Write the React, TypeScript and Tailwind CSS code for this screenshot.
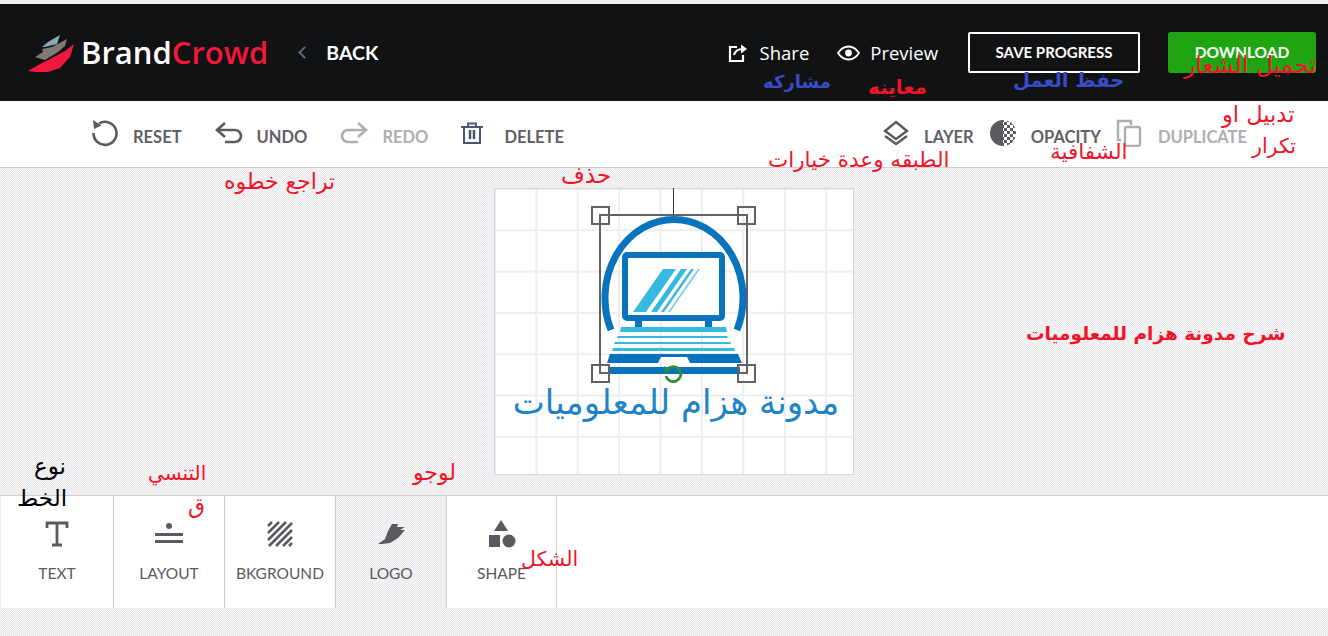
import React from "react";

function Note({ className, blue, children }: { className: string; blue?: boolean; children: React.ReactNode }) {
  const colour = blue ? "font-bold text-[#3a4bc8]" : "text-[#f01428]";
  return (
    <span dir="rtl" className={`absolute font-['DejaVu_Sans',sans-serif] leading-[24px] whitespace-nowrap ${colour} ${className}`}>
      {children}
    </span>
  );
}

function ResetIcon() {
  return (
    <svg width="28" height="28" viewBox="0 0 28 28" fill="none" stroke="#5c5a60" strokeWidth="2.600">
      <path d="M8 4.500A11.500 11.500 0 1 1 2.500 14" />
      <path d="M2 1l1 9 7.500-3.500Z" fill="#5c5a60" stroke="none" />
    </svg>
  );
}

function UndoIcon({ color = "#5c5a60", flip = false }: { color?: string; flip?: boolean }) {
  return (
    <svg width="28" height="24" viewBox="0 0 28 24" fill="none" stroke={color} strokeWidth="2.600" className={flip ? "-scale-x-100" : ""}>
      <path d="M10 2 2 9l8 7" />
      <path d="M2 9h18a6 6 0 0 1 6 6v0a6 6 0 0 1-6 6h-10" />
    </svg>
  );
}

function TrashIcon() {
  return (
    <svg width="22" height="22" viewBox="0 0 22 22" fill="none" stroke="#4a5875" strokeWidth="2">
      <path d="M0 5h22M7 5V1.500h8V5M3 5v16h16V5" />
      <path d="M9 8v9M13 8v9" strokeWidth="2.500" />
    </svg>
  );
}

function LayerIcon() {
  return (
    <svg width="28" height="26" viewBox="0 0 28 26" fill="none" stroke="#5c5a60" strokeWidth="2.400">
      <path d="M14 2 25 11 14 19 3 11Z" />
      <path d="M3 16l11 8 11-8" />
    </svg>
  );
}

function OpacityIcon() {
  return (
    <svg width="28" height="28" viewBox="0 0 28 28">
      <defs>
        <pattern id="checks" width="6" height="6" patternUnits="userSpaceOnUse">
          <rect width="3" height="3" fill="#5c5a60" />
          <rect x="3" y="3" width="3" height="3" fill="#5c5a60" />
        </pattern>
      </defs>
      <path d="M14 1a13 13 0 0 0 0 26Z" fill="#5c5a60" />
      <path d="M14 1a13 13 0 0 1 0 26Z" fill="url(#checks)" />
    </svg>
  );
}

function DuplicateIcon() {
  return (
    <svg width="26" height="28" viewBox="0 0 26 28" fill="none" stroke="#aeaeb0" strokeWidth="2.400">
      <path d="M5 21H2V2h13v4" />
      <rect x="9" y="8" width="15" height="19" rx="2" />
    </svg>
  );
}

function ShareIcon() {
  return (
    <svg width="21" height="20" viewBox="0 0 21 20" fill="none" stroke="#fff" strokeWidth="2.200">
      <path d="M9 4H2v14h13v-6" />
      <path d="M6 12c1-4 4-6 9-6" />
      <path d="M13 1.500 19 6l-6 4.500Z" fill="#fff" stroke="none" />
    </svg>
  );
}

function EyeIcon() {
  return (
    <svg width="23" height="16" viewBox="0 0 23 16" fill="none" stroke="#fff" strokeWidth="1.800">
      <path d="M1 8c3-4.500 6.500-6.500 10.500-6.500S19 3.500 22 8c-3 4.500-6.500 6.500-10.500 6.500S4 12.500 1 8Z" />
      <circle cx="11.500" cy="8" r="2.500" fill="#fff" />
    </svg>
  );
}

function BrandLogo() {
  return (
    <svg width="46" height="38" viewBox="0 0 46 38" className="overflow-visible">
      <path d="M13 13 19 8 31 1 29 7 28 10 16 13Z" fill="#8fa8b8" />
      <path d="M6 23 14 18 13 15 23 13 38 5 36 12 29 18 16 26Z" fill="#7f7a76" />
      <path d="M-1 37 11 30 21 25 36 17 45 10 41 23 31 34 19 38 6 38Z" fill="#f0183c" />
    </svg>
  );
}

function TextIcon() {
  return (
    <svg width="24" height="26" viewBox="0 0 24 26" fill="none" stroke="#5c5a60" strokeWidth="2.800">
      <path d="M2 7V2h20v5M12 2v22M7 24h10" />
    </svg>
  );
}

function LayoutIcon() {
  return (
    <svg width="30" height="24" viewBox="0 0 30 24" fill="#5c5a60">
      <circle cx="15" cy="4" r="3" />
      <rect x="1" y="11" width="28" height="3" />
      <rect x="1" y="18" width="28" height="3" />
    </svg>
  );
}

function BackgroundIcon() {
  return (
    <svg width="26" height="26" viewBox="0 0 26 26" fill="none" stroke="#5c5a60" strokeWidth="2.600">
      <path d="M1 5 5 1M1 12 12 1M1 19 19 1M2 25 25 2M9 25 25 9M16 25l9-9M22 25l3-3" />
    </svg>
  );
}

function LogoIcon() {
  return (
    <svg width="30" height="26" viewBox="0 0 30 26" fill="#5c5a60">
      <path d="M2 23 9 18 12 10 16 3 22 3 21 6 29 6 24 9 29 9 22 17 14 22 6 23Z" />
    </svg>
  );
}

function ShapeIcon() {
  return (
    <svg width="28" height="28" viewBox="0 0 28 28" fill="#5c5a60">
      <path d="M13 0l7 11H6Z" />
      <rect x="1" y="15" width="11" height="12" />
      <circle cx="21" cy="21" r="6.500" />
    </svg>
  );
}

function LaptopArt() {
  return (
    <svg width="148" height="162" viewBox="0 0 148 162" className="block">
      <path d="M11 115A69 78.500 0 1 1 137 115" fill="none" stroke="#0a73bd" strokeWidth="7" />
      <rect x="25" y="40" width="97" height="63" rx="2" fill="#fff" stroke="#0a73bd" strokeWidth="6" />
      <path d="M33 97 63 54h13L46 97Z" fill="#36b8e0" />
      <path d="M51 97 81 54h6L57 97Z" fill="#36b8e0" />
      <path d="M61 97 91 54h3L64 97Z" fill="#36b8e0" />
      <path d="M68 97l30-43h2L70 97Z" fill="#70cdea" />
      <rect x="35" y="106" width="7" height="7" fill="#0a73bd" />
      <rect x="105" y="106" width="7" height="7" fill="#0a73bd" />
      <path d="M21 112h105l1 5H20Z" fill="#36b8e0" />
      <path d="M18 121h109l1 2H17Z" fill="#36b8e0" />
      <path d="M15 127h115l1 2H14Z" fill="#36b8e0" />
      <path d="M13 133h121l1 3H12Z" fill="#36b8e0" />
      <path d="M10 139h128l4 9H90l-3-6H61l-3 6H7Z" fill="#0a73bd" />
      <rect x="8" y="152" width="132" height="7" fill="#0a73bd" />
    </svg>
  );
}

function Handle({ className }: { className: string }) {
  return <div className={`absolute h-[19px] w-[19px] border-2 border-[#626262] ${className}`} />;
}

function ToolItem({ icon, label, muted, gap }: { icon: React.ReactNode; label: string; muted?: boolean; gap: string }) {
  return (
    <div className={`flex items-center ${gap} ${muted ? "text-[#aeaeb0]" : "text-[#625f66]"}`}>
      <span className="mb-[3px] flex">{icon}</span>
      <span className="pt-[6px] text-[16.500px] font-bold leading-none">{label}</span>
    </div>
  );
}

function Tab({ icon, label, active, width }: { icon: React.ReactNode; label: string; active?: boolean; width: string }) {
  return (
    <div className={`flex h-full ${width} flex-col items-center border-r border-[#cfcfcf] pt-[23px] ${active ? "" : "bg-white"}`}>
      <div className="flex h-[30px] items-center">{icon}</div>
      <span className="mt-[14px] text-[15.500px] leading-[20px] text-[#5c5a60]">{label}</span>
    </div>
  );
}

export default function App() {
  return (
    <div className="relative h-[636px] w-[1328px] overflow-hidden bg-[repeating-conic-gradient(#e6e6ec_0_25%,#f7f7f5_0_50%)] bg-[size:2px_2px] font-['Lato',sans-serif]">
      <div className="h-[4px]" />
      <header className="flex h-[97px] items-center bg-[#111213] pr-[12px] pl-[29px]">
        <BrandLogo />
        <div className="ml-[6px] font-['Open_Sans',sans-serif] text-[31px] leading-none font-semibold text-white">
          Brand<span className="text-[#f0183c]">Crowd</span>
        </div>
        <span className="ml-[32px] h-[9px] w-[9px] -rotate-45 border-t-2 border-l-2 border-[#616a80]" />
        <span className="ml-[17px] text-[19.500px] font-bold text-white">BACK</span>
        <div className="ml-auto flex items-center text-white">
          <ShareIcon />
          <span className="ml-[11px] font-['Open_Sans',sans-serif] text-[18.500px]">Share</span>
          <span className="ml-[28px] flex"><EyeIcon /></span>
          <span className="ml-[10px] font-['Open_Sans',sans-serif] text-[18.500px]">Preview</span>
          <button className="ml-[30px] h-[41px] w-[172px] rounded-[2px] border-2 border-white text-[15px] font-bold">SAVE PROGRESS</button>
          <button className="ml-[28px] h-[41px] w-[148px] rounded-[3px] bg-[#20a512] text-[15.500px] font-bold">DOWNLOAD</button>
        </div>
      </header>

      <div className="flex h-[67px] items-center justify-between border-b border-[#cfcfcf] bg-white pr-[81px] pl-[91px]">
        <div className="flex items-center gap-[33px]">
          <ToolItem icon={<ResetIcon />} label="RESET" gap="gap-[14px]" />
          <ToolItem icon={<UndoIcon />} label="UNDO" gap="gap-[14px]" />
          <ToolItem icon={<UndoIcon color="#aeaeb0" flip />} label="REDO" muted gap="gap-[14px]" />
          <ToolItem icon={<TrashIcon />} label="DELETE" gap="gap-[21px]" />
        </div>
        <div className="flex items-center gap-[15px]">
          <ToolItem icon={<LayerIcon />} label="LAYER" gap="gap-[14px]" />
          <ToolItem icon={<OpacityIcon />} label="OPACITY" gap="gap-[14px]" />
          <ToolItem icon={<DuplicateIcon />} label="DUPLICATE" muted gap="gap-[16px]" />
        </div>
      </div>

      <main className="h-[327px] pt-[20px] pl-[494px]">
        <div className="relative h-[287px] w-[360px] border border-[#d6d6d6] bg-white bg-[linear-gradient(to_right,#eeebf2_2px,transparent_2px),linear-gradient(to_bottom,#eeeeee_2px,transparent_2px)] bg-[size:41.400px_41.300px] bg-[position:-1px_-1px]">
          <div className="absolute top-[-1px] left-[178px] h-[26px] w-[1px] bg-[#333]" />
          <div className="absolute top-[25px] left-[104px] h-[160px] w-[149px] border-2 border-[#626262]" />
          <div className="absolute top-[26px] left-[105px]"><LaptopArt /></div>
          <Handle className="top-[17px] left-[96px]" />
          <Handle className="top-[17px] left-[242px]" />
          <Handle className="top-[175px] left-[96px]" />
          <Handle className="top-[175px] left-[242px]" />
          <svg width="20" height="20" viewBox="0 0 20 20" fill="none" stroke="#2f8f3c" strokeWidth="2.800" className="absolute top-[175px] left-[168px]">
            <path d="M6 4a7.500 7.500 0 1 1-3 8" />
            <path d="M1 2l1 7 6-3Z" fill="#2f8f3c" stroke="none" />
          </svg>
          <div dir="rtl" className="absolute top-[191px] left-[2px] w-full text-center font-['DejaVu_Sans',sans-serif] text-[34px] leading-[44px] whitespace-nowrap text-[#1f83c8]">
            مدونة هزام للمعلوميات
          </div>
        </div>
      </main>

      <nav className="flex h-[113px] items-stretch border-t border-[#cfcfcf] pl-[1px]">
        <Tab icon={<TextIcon />} label="TEXT" width="w-[113px]" />
        <Tab icon={<LayoutIcon />} label="LAYOUT" width="w-[111px]" />
        <Tab icon={<BackgroundIcon />} label="BKGROUND" width="w-[111px]" />
        <Tab icon={<LogoIcon />} label="LOGO" active width="w-[111px]" />
        <Tab icon={<ShapeIcon />} label="SHAPE" width="w-[110px]" />
        <div className="flex-1 bg-white" />
      </nav>

      <Note blue className="top-[70px] left-[763px] text-[18px]">مشاركه</Note>
      <Note className="top-[75px] left-[868px] text-[20px] font-bold">معاينه</Note>
      <Note blue className="top-[69px] left-[1013px] text-[19.500px]">حفظ العمل</Note>
      <Note className="top-[53px] left-[1184px] text-[23.500px]">تحميل الشعار</Note>
      <Note className="top-[102px] left-[1222px] text-[22.500px]">تدبيل او</Note>
      <Note className="top-[134px] left-[1252px] text-[20.500px]">تكرار</Note>
      <Note className="top-[148px] left-[768px] text-[21.500px]">الطبقه وعدة خيارات</Note>
      <Note className="top-[140px] left-[1050px] text-[21.500px]">الشفافية</Note>
      <Note className="top-[170px] left-[224px] text-[22px]">تراجع خطوه</Note>
      <Note className="top-[163px] left-[561px] text-[23px]">حذف</Note>
      <Note className="top-[322px] left-[1026px] text-[18.500px] font-bold">شرح مدونة هزام للمعلوميات</Note>
      <Note className="top-[454px] left-[34px] text-[23px] !text-black">نوع</Note>
      <Note className="top-[486px] left-[17px] text-[23px] !text-black">الخط</Note>
      <Note className="top-[461px] left-[148px] text-[20px]">التنسي</Note>
      <Note className="top-[494px] left-[188px] text-[22px]">ق</Note>
      <Note className="top-[461px] left-[413px] text-[22px]">لوجو</Note>
      <Note className="top-[547px] left-[521px] text-[20.500px]">الشكل</Note>
    </div>
  );
}
